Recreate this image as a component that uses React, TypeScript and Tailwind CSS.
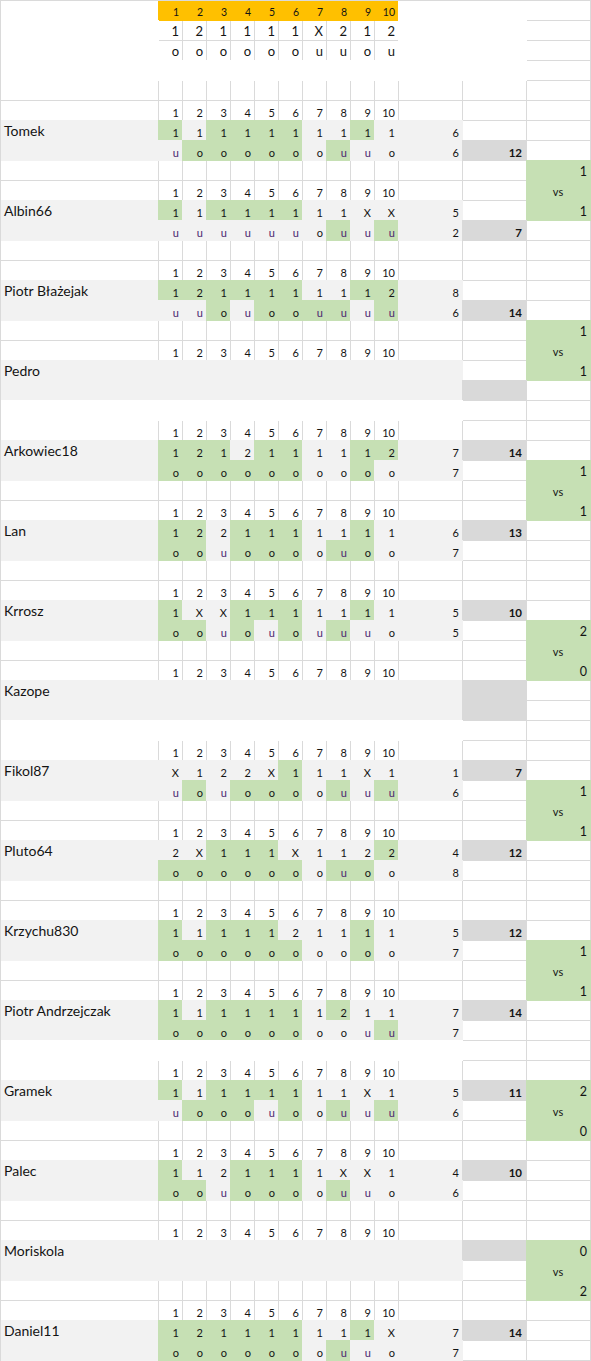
import React from "react";

type Fill = "n" | "w" | "g" | "d" | "G" | "y";
type Kind = "name" | "top" | "big" | "sm" | "l" | "m" | "n" | "vs";
type Cell = { f: Fill; t?: string; k?: Kind };

interface Player {
  name: string;
  picks?: string;
  pg?: string;
  ou?: string;
  og?: string;
  l?: [number, number];
  m?: number;
}

const RESULT = "121111X212";
const RESULT_OU = "oooooouuou";

const PLAYERS: Player[] = [
  { name: "Tomek", picks: "1111111111", pg: "1011110010", ou: "uoooooouuo", og: "0111110100", l: [6, 6], m: 12 },
  { name: "Albin66", picks: "11111111XX", pg: "1011110000", ou: "uuuuuuouuu", og: "0000000101", l: [5, 2], m: 7 },
  { name: "Piotr Błażejak", picks: "1211111112", pg: "1111110011", ou: "uuouoouuuu", og: "0010111101", l: [8, 6], m: 14 },
  { name: "Pedro" },
  { name: "Arkowiec18", picks: "1212111112", pg: "1110110011", ou: "oooooooooo", og: "1111110010", l: [7, 7], m: 14 },
  { name: "Lan", picks: "1221111111", pg: "1101110010", ou: "oouoooouoo", og: "1101110110", l: [6, 7], m: 13 },
  { name: "Krrosz", picks: "1XX1111111", pg: "1001110010", ou: "oouououuuo", og: "1101010100", l: [5, 5], m: 10 },
  { name: "Kazope" },
  { name: "Fikol87", picks: "X122X111X1", pg: "0000010000", ou: "uouoooouuu", og: "0101110101", l: [1, 6], m: 7 },
  { name: "Pluto64", picks: "2X111X1122", pg: "0011100001", ou: "ooooooouoo", og: "1111110110", l: [4, 8], m: 12 },
  { name: "Krzychu830", picks: "1111121111", pg: "1011100010", ou: "oooooooooo", og: "1111110010", l: [5, 7], m: 12 },
  { name: "Piotr Andrzejczak", picks: "1111111211", pg: "1011110100", ou: "oooooooouu", og: "1111110001", l: [7, 7], m: 14 },
  { name: "Gramek", picks: "11111111X1", pg: "1011110000", ou: "uooouoouuu", og: "0111010101", l: [5, 6], m: 11 },
  { name: "Palec", picks: "1121111XX1", pg: "1001110000", ou: "oouoooouuo", og: "1101110100", l: [4, 6], m: 10 },
  { name: "Moriskola" },
  { name: "Daniel11", picks: "121111111X", pg: "1111110010", ou: "ooooooouuo", og: "1111110100", l: [7, 7], m: 14 },
];

// match boxes in the last column: first row index and the two scores
const VERSUS: [number, string, string][] = [
  [8, "1", "1"],
  [16, "1", "1"],
  [23, "1", "1"],
  [31, "2", "0"],
  [39, "1", "1"],
  [47, "1", "1"],
  [54, "2", "0"],
  [62, "0", "2"],
];

const WHITE_ROWS = [20, 36, 52];

const FILL: Record<Fill, string> = {
  n: "border-[#dadada]",
  w: "bg-white border-white",
  g: "bg-[#f2f2f2] border-[#f2f2f2]",
  d: "bg-[#d9d9d9] border-[#d9d9d9]",
  G: "bg-[#c6e0b4] border-[#c6e0b4]",
  y: "bg-[#ffc000] border-[#ffc000]",
};

const KIND: Record<Kind, string> = {
  name: "justify-start pl-[3px] text-[14px] pb-[2px]",
  top: "justify-end pr-[3px] text-[10.5px] pb-[3px]",
  big: "justify-end pr-[3px] text-[13px] pb-[2px]",
  sm: "justify-end pr-[3px] text-[11px] pb-[2px]",
  l: "justify-end pr-[3px] text-[11px] pb-[2px]",
  m: "justify-end pr-[4px] text-[11.5px] font-bold pb-[2px]",
  n: "justify-end pr-[3px] text-[12.5px] pb-[2px]",
  vs: "justify-center text-[11px] pb-[3px]",
};

const nums = Array.from({ length: 10 }, (_, i) => String(i + 1));
const blank = (f: Fill = "n"): Cell => ({ f });

function buildRows(): Cell[][] {
  const rows: Cell[][] = [];
  rows.push([blank("w"), ...nums.map((t): Cell => ({ f: "y", t, k: "top" })), blank("w"), blank("w"), blank()]);
  rows.push([blank("w"), ...RESULT.split("").map((t): Cell => ({ f: "n", t, k: "big" })), blank("w"), blank("w"), blank()]);
  rows.push([blank("w"), ...RESULT_OU.split("").map((t): Cell => ({ f: "n", t, k: "big" })), blank("w"), blank("w"), blank()]);
  rows.push([blank("w"), ...nums.map(() => blank("w")), blank("w"), blank("w"), blank()]);
  rows.push(Array.from({ length: 14 }, () => blank()));

  PLAYERS.forEach((p, i) => {
    rows.push([blank(), ...nums.map((t): Cell => ({ f: "n", t, k: "sm" })), blank(), blank(), blank()]);
    const early = i < 4;
    if (p.picks && p.pg && p.ou && p.og && p.l) {
      rows.push([
        { f: "g", t: p.name, k: "name" },
        ...p.picks.split("").map((t, j): Cell => ({ f: p.pg![j] === "1" ? "G" : "g", t, k: "sm" })),
        { f: "g", t: String(p.l[0]), k: "l" },
        early ? blank() : { f: "d", t: String(p.m), k: "m" },
        blank(),
      ]);
      rows.push([
        blank("g"),
        ...p.ou.split("").map((t, j): Cell => ({ f: p.og![j] === "1" ? "G" : "g", t, k: "sm" })),
        { f: "g", t: String(p.l[1]), k: "l" },
        early ? { f: "d", t: String(p.m), k: "m" } : blank(),
        blank(),
      ]);
    } else {
      const mTop = i === 7 || i === 14;
      const mBot = i === 3 || i === 7;
      rows.push([{ f: "g", t: p.name, k: "name" }, ...nums.map(() => blank("g")), blank("g"), blank(mTop ? "d" : "n"), blank()]);
      rows.push([blank("g"), ...nums.map(() => blank("g")), blank("g"), blank(mBot ? "d" : "n"), blank()]);
    }
    if (rows.length < 68) {
      const white = WHITE_ROWS.includes(rows.length);
      rows.push([...Array.from({ length: 12 }, () => blank(white ? "w" : "n")), blank(), blank()]);
    }
  });

  VERSUS.forEach(([r, a, b]) => {
    rows[r][13] = { f: "G", t: a, k: "n" };
    rows[r + 1][13] = { f: "G", t: "vs", k: "vs" };
    rows[r + 2][13] = { f: "G", t: b, k: "n" };
  });
  return rows;
}

function GridCell({ cell, r, c }: { cell: Cell; r: number; c: number }) {
  const filled = cell.f !== "n";
  const color = cell.t === "u" && cell.k === "sm" ? "text-[#4a1f6e]" : "text-[#141414]";
  return (
    <div
      className={`flex items-end leading-none whitespace-nowrap border-r border-b ${FILL[cell.f]} ${
        filled && r > 0 ? "-mt-px" : ""
      } ${filled && c > 0 ? "-ml-px" : ""} ${cell.k ? KIND[cell.k] : ""} ${color}`}
    >
      {cell.t}
    </div>
  );
}

export default function App() {
  const rows = buildRows();
  return (
    <div className="w-[591px] bg-white font-['Lato',sans-serif]">
      <div className="grid grid-cols-[158px_repeat(10,24px)_64px_64px_64px] auto-rows-[20px] border-t border-l border-[#dadada]">
        {rows.map((row, r) => row.map((cell, c) => <GridCell key={`${r}-${c}`} cell={cell} r={r} c={c} />))}
      </div>
    </div>
  );
}
